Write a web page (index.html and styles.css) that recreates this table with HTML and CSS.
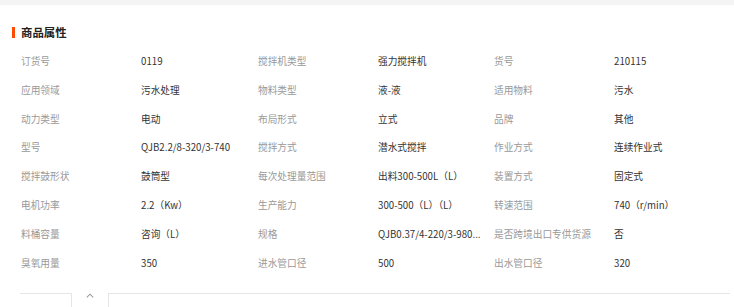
FILE: index.html
```html
<!DOCTYPE html>
<html lang="zh">
<head>
<meta charset="utf-8">
<title>商品属性</title>
<link rel="stylesheet" href="styles.css">
</head>
<body>
<div class="topband"></div>
<section class="attrs">
  <h2 class="title"><span class="bar"></span>商品属性</h2>
  <div class="grid">
    <div class="k">订货号</div><div class="v">0119</div>
    <div class="k">搅拌机类型</div><div class="v">强力搅拌机</div>
    <div class="k">货号</div><div class="v">210115</div>

    <div class="k">应用领域</div><div class="v">污水处理</div>
    <div class="k">物料类型</div><div class="v">液-液</div>
    <div class="k">适用物料</div><div class="v">污水</div>

    <div class="k">动力类型</div><div class="v">电动</div>
    <div class="k">布局形式</div><div class="v">立式</div>
    <div class="k">品牌</div><div class="v">其他</div>

    <div class="k">型号</div><div class="v">QJB2.2/8-320/3-740</div>
    <div class="k">搅拌方式</div><div class="v">潜水式搅拌</div>
    <div class="k">作业方式</div><div class="v">连续作业式</div>

    <div class="k">搅拌鼓形状</div><div class="v">鼓筒型</div>
    <div class="k">每次处理量范围</div><div class="v">出料300-500L（L）</div>
    <div class="k">装置方式</div><div class="v">固定式</div>

    <div class="k">电机功率</div><div class="v">2.2（Kw）</div>
    <div class="k">生产能力</div><div class="v">300-500（L）（L）</div>
    <div class="k">转速范围</div><div class="v">740（r/min）</div>

    <div class="k">料桶容量</div><div class="v">咨询（L）</div>
    <div class="k">规格</div><div class="v">QJB0.37/4-220/3-980...</div>
    <div class="k">是否跨境出口专供货源</div><div class="v">否</div>

    <div class="k">臭氧用量</div><div class="v">350</div>
    <div class="k">进水管口径</div><div class="v">500</div>
    <div class="k">出水管口径</div><div class="v">320</div>
  </div>
  <div class="divider">
    <div class="seg seg-left"></div>
    <div class="tab">
      <svg class="caret" width="8" height="5" viewBox="0 0 8 5"><path d="M0.8 4.3 L4 1.2 L7.2 4.3" fill="none" stroke="#9a9a9a" stroke-width="1.1"/></svg>
    </div>
    <div class="seg seg-right"></div>
  </div>
</section>
</body>
</html>
```

FILE: styles.css
```css
html, body {
  margin: 0;
  padding: 0;
  background: #fff;
  height: 307px;
  overflow: hidden;
}
body {
  font-family: "Noto Sans CJK SC", "Microsoft YaHei", sans-serif;
  font-size: 9.7px;
  color: #333;
}
.topband {
  height: 5px;
  background: #f4f4f4;
}
.attrs {
  padding: 0 4px 0 12px;
}
.title {
  display: flex;
  align-items: center;
  margin: 0;
  height: 20px;
  margin-top: 17px;
  font-size: 11.4px;
  font-weight: bold;
  color: #222;
  line-height: 20px;
}
.bar {
  width: 3px;
  height: 11px;
  background: #ff4a00;
  margin-right: 6px;
}
.grid {
  display: grid;
  grid-template-columns: 120px 117px 120px 116px 120px 1fr;
  grid-auto-rows: 28.85px;
  margin-top: 4.5px;
  padding-left: 9px;
  align-items: center;
}
.k {
  color: #999;
  white-space: nowrap;
}
.v {
  color: #333;
  white-space: nowrap;
}
.divider {
  display: flex;
  margin-top: 16px;
  margin-left: 8px;
  height: 20px;
}
.seg {
  border-top: 1px solid #e6e6e6;
}
.seg-left {
  width: 51px;
}
.seg-right {
  flex: 1;
}
.tab {
  width: 38px;
  border-left: 1px solid #e6e6e6;
  border-right: 1px solid #e6e6e6;
  display: flex;
  justify-content: center;
  padding-top: 0;
  box-sizing: border-box;
}
.caret {
  display: block;
}
```
